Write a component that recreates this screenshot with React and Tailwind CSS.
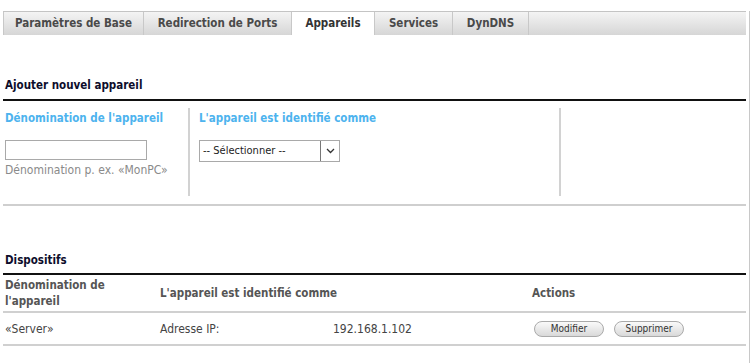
import React from 'react';

const tabs = ['Paramètres de Base', 'Redirection de Ports', 'Appareils', 'Services', 'DynDNS'];

const tabWidths = ['w-[140px]', 'w-[148px]', 'w-[83px]', 'w-[78px]', 'w-[76px]'];

const App = () => {
  return (
    <div className="w-[753px] h-[363px] bg-white overflow-hidden text-[11px] text-[#333]" style={{ fontFamily: '"DejaVu Sans Condensed", "DejaVu Sans", sans-serif' }}>
      <div className="flex h-full">
        <div className="w-[746px] pl-[3px]">
          {/* tabs */}
          <div className="mt-[11px] flex h-[24px] border-t border-[#c4c4c4]">
            {tabs.map((t, i) => (
              <div
                key={t}
                className={`${tabWidths[i]} flex items-center justify-center font-bold text-[11.5px] border-l border-[#c8c8c8] ${
                  t === 'Appareils'
                    ? 'bg-white text-[#333]'
                    : 'bg-gradient-to-b from-[#f4f4f4] to-[#d6d6d6] text-[#4a4a4a]'
                }`}
              >
                {t}
              </div>
            ))}
            <div className="flex-1 border-l border-[#c8c8c8] bg-gradient-to-b from-[#f4f4f4] to-[#d6d6d6]"></div>
          </div>

          {/* add device */}
          <div className="mt-[42px] pl-[2px] font-bold text-[#0d0d2b] text-[11.5px] leading-[16px]">Ajouter nouvel appareil</div>
          <div className="mt-[6px] h-[2px] bg-[#111]"></div>
          <div className="flex h-[103px] pt-[7px]">
            <div className="w-[185px] pl-[2px]">
              <div className="font-bold text-[#4db3ee] text-[11.5px] leading-[16px] pt-[2px]">Dénomination de l'appareil</div>
              <input className="mt-[14px] block w-[142px] h-[20px] border border-[#a9a9a9] bg-white" />
              <div className="mt-[2px] text-[#8a8a8a] text-[12px] leading-[16px]">Dénomination p. ex. «MonPC»</div>
            </div>
            <div className="w-[2px] h-[88px] bg-[#d2d2d2]"></div>
            <div className="w-[369px] pl-[9px]">
              <div className="font-bold text-[#4db3ee] text-[11.5px] leading-[16px] pt-[2px]">L'appareil est identifié comme</div>
              <div className="mt-[14px] flex w-[141px] h-[22px] border border-[#a9a9a9] bg-white">
                <div className="flex-1 flex items-center pl-[3px] text-[11px] text-[#222]">-- Sélectionner --</div>
                <div className="w-[19px] border-l border-[#777] flex items-center justify-center">
                  <svg width="9" height="6" viewBox="0 0 9 6"><path d="M1 1l3.5 3.5L8 1" stroke="#333" strokeWidth="1.3" fill="none" /></svg>
                </div>
              </div>
            </div>
            <div className="w-[2px] h-[88px] bg-[#d2d2d2]"></div>
          </div>
          <div className="h-[2px] bg-[#cfcfcf]"></div>

          {/* devices */}
          <div className="mt-[46px] pl-[2px] font-bold text-[#0d0d2b] text-[11.5px] leading-[16px]">Dispositifs</div>
          <div className="mt-[5px] h-[2px] bg-[#111]"></div>
          <div className="flex h-[38px] items-center text-[#555] text-[11.5px] font-bold leading-[16px] border-b-2 border-[#d0d0d0]">
            <div className="w-[157px] pl-[2px]">Dénomination de<br />l'appareil</div>
            <div className="w-[372px]">L'appareil est identifié comme</div>
            <div>Actions</div>
          </div>
          <div className="flex h-[33px] items-center text-[12px] text-[#444] border-b-2 border-[#d0d0d0]">
            <div className="w-[157px] pl-[2px]">«Server»</div>
            <div className="w-[173px]">Adresse IP:</div>
            <div className="w-[201px]">192.168.1.102</div>
            <div className="flex gap-[10px]">
              <button className="w-[70px] h-[16px] rounded-full border border-[#aaa] bg-gradient-to-b from-[#fafafa] to-[#d9d9d9] text-[10px] text-[#333] leading-[14px]">Modifier</button>
              <button className="w-[70px] h-[16px] rounded-full border border-[#aaa] bg-gradient-to-b from-[#fafafa] to-[#d9d9d9] text-[10px] text-[#333] leading-[14px]">Supprimer</button>
            </div>
          </div>
        </div>
        <div className="ml-[3px] mt-[11px] w-[1px] bg-[#c8c8c8]"></div>
      </div>
    </div>
  );
};

export default App;
